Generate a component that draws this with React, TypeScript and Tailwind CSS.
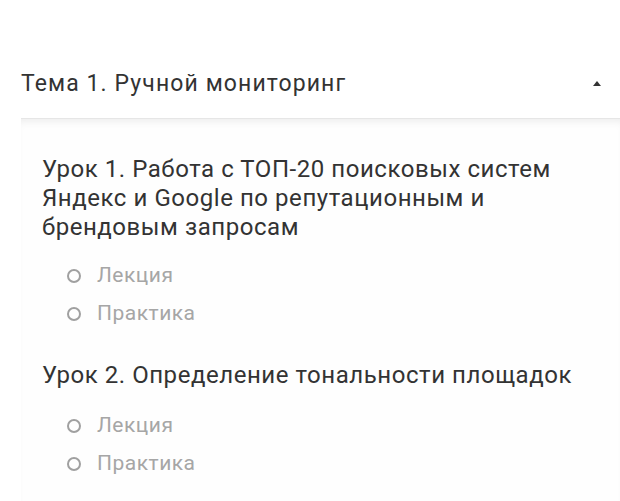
import React from "react";

function Radio({ label }: { label: string }) {
  return (
    <div className="flex items-center h-[38px]">
      <span className="shrink-0 w-[14px] h-[14px] rounded-full border-[2.5px] border-[#a0a0a0] mr-[16px] ml-[1px]" />
      <span className="text-[21px] tracking-[0.5px] text-[#a6a6a6]">{label}</span>
    </div>
  );
}

export default function App() {
  return (
    <div className="w-[620px] h-[501px] bg-white overflow-hidden" style={{ fontFamily: "Roboto, 'Noto Sans', sans-serif" }}>
      <div className="h-[50px]" />
      <div className="h-[68px] flex items-center justify-between pl-[21px] pr-[19px]">
        <span className="text-[23px] tracking-[1.1px] text-[#333333]">Тема 1. Ручной мониторинг</span>
        <svg width="8" height="5" viewBox="0 0 8 5" className="-mt-[2px]"><path d="M0 5 L4 0 L8 5 Z" fill="#333" /></svg>
      </div>
      <div className="ml-[21px] bg-[#fefefe] border-t border-[#e6e6e6] shadow-[inset_0_7px_9px_-5px_rgba(0,0,0,0.08)] pl-[21px] pt-[36px] h-[400px]">
        <div className="text-[24px] leading-[29px] tracking-[0.55px] text-[#333333] whitespace-nowrap">
          Урок 1. Работа с ТОП-20 поисковых систем
          <br />
          Яндекс и Google по репутационным и
          <br />
          брендовым запросам
        </div>
        <div className="pl-[24px] mt-[15px]">
          <Radio label="Лекция" />
          <Radio label="Практика" />
        </div>
        <div className="text-[24px] leading-[29px] tracking-[0.55px] text-[#333333] mt-[28px]">
          Урок 2. Определение тональности площадок
        </div>
        <div className="pl-[24px] mt-[17px]">
          <Radio label="Лекция" />
          <Radio label="Практика" />
        </div>
      </div>
    </div>
  );
}
